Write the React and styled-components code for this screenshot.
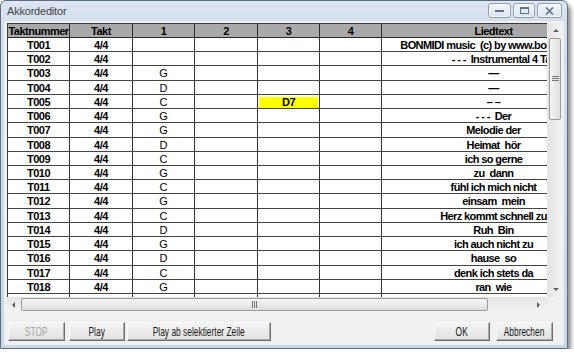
import React from 'react';
import styled, { createGlobalStyle } from 'styled-components';

const GlobalStyle = createGlobalStyle`
  html, body { margin: 0; padding: 0; background: #fff; }
  body { font-family: "Liberation Sans", Arial, sans-serif; }
`;

const COLS = [62, 63, 62, 63, 62, 62, 224];
const HEAD = ['Taktnummer', 'Takt', '1', '2', '3', '4', 'Liedtext'];
const ROW_H = 14.22;

const rows = [
  ['T001', '', '', 'BONMIDI music  (c) by www.bonmidi.de'],
  ['T002', '', '', '            - - -  Instrumental 4 Takte'],
  ['T003', 'G', '', '\u2014'],
  ['T004', 'D', '', '\u2014'],
  ['T005', 'C', 'D7', '\u2013 \u2013'],
  ['T006', 'G', '', '- - -  Der'],
  ['T007', 'G', '', 'Melodie der'],
  ['T008', 'D', '', 'Heimat  hör'],
  ['T009', 'C', '', 'ich so gerne'],
  ['T010', 'G', '', 'zu  dann'],
  ['T011', 'C', '', 'fühl ich mich nicht'],
  ['T012', 'G', '', 'einsam  mein'],
  ['T013', 'C', '', 'Herz kommt schnell zu'],
  ['T014', 'D', '', 'Ruh  Bin'],
  ['T015', 'G', '', 'ich auch nicht zu'],
  ['T016', 'D', '', 'hause  so'],
  ['T017', 'C', '', 'denk ich stets da'],
  ['T018', 'G', '', 'ran  wie'],
  ['', '', '', ''],
];

const Frame = styled.div`
  box-sizing: border-box;
  width: 568px;
  height: 349px;
  border: 1px solid #5f6f82;
  border-radius: 6px 6px 0 0;
  background: linear-gradient(#dde7f3 0, #d3dfec 20px, #c9d7e6 100%);
  box-shadow: 3px 4px 4px rgba(0, 0, 0, 0.45);
  display: flex;
  flex-direction: column;
`;

const TitleBar = styled.div`
  height: 20px;
  display: flex;
  align-items: flex-start;
  justify-content: space-between;
`;

const Title = styled.div`
  padding: 4px 0 0 6px;
  font-size: 11px;
  letter-spacing: -0.2px;
  color: #444;
`;

const Controls = styled.div`
  display: flex;
  margin: 2px 5px 0 0;
`;

const Ctrl = styled.div`
  box-sizing: border-box;
  width: ${p => p.$w}px;
  height: 15px;
  margin-left: ${p => p.$ml || 0}px;
  border: 1px solid #8e9fb5;
  border-radius: 3px;
  background: linear-gradient(#f4f7fb, #dbe4ef);
  box-shadow: inset 0 0 0 1px rgba(255, 255, 255, 0.7);
  display: flex;
  align-items: center;
  justify-content: center;
`;

const Client = styled.div`
  flex: 1;
  margin: 0 3px 3px 3px;
  background: #f0f0f0;
  padding: 2px 2px 0 3px;
  display: flex;
  flex-direction: column;
`;

const GridBox = styled.div`
  display: grid;
  grid-template-columns: 540px 15px;
  grid-template-rows: 274px 15px;
`;

const TableView = styled.div`
  overflow: hidden;
  border-left: 1px solid #3a3a3a;
  border-top: 1px solid #3a3a3a;
  background: #fff;
`;

const Row = styled.div`
  display: flex;
  width: max-content;
  height: ${p => (p.$head ? 14 : ROW_H)}px;
  box-sizing: border-box;
  border-bottom: 1px solid ${p => (p.$head ? '#2a2a2a' : '#454545')};
  background: ${p => (p.$head ? '#a9a9a9' : '#fff')};
`;

const Cell = styled.div`
  box-sizing: border-box;
  width: ${p => p.$w}px;
  flex: none;
  border-right: 1px solid ${p => (p.$head ? '#2a2a2a' : '#353535')};
  overflow: hidden;
  white-space: pre;
  text-align: center;
  font-size: 11px;
  line-height: 14px;
  font-weight: ${p => (p.$light ? 400 : 700)};
  letter-spacing: ${p => (p.$light ? 0 : p.$tight ? -0.6 : -0.5)}px;
  color: #000;
`;

const Mark = styled.div`
  margin: 2px 1px 0 1px;
  height: 11px;
  line-height: 11px;
  background: ${p => (p.$on ? '#ffff00' : 'transparent')};
`;

const VScroll = styled.div`
  display: flex;
  flex-direction: column;
  background: linear-gradient(to right, #e4e4e4, #f3f3f3);
  border-left: 1px solid #e8e8e8;
  box-sizing: border-box;
`;

const HScroll = styled.div`
  display: flex;
  background: linear-gradient(#e4e4e4, #f3f3f3);
`;

const Corner = styled.div`
  background: #f0f0f0;
`;

const Arrow = styled.div`
  flex: none;
  width: ${p => p.$w || 15}px;
  height: ${p => p.$h || 15}px;
  display: flex;
  align-items: center;
  justify-content: center;
`;

const Thumb = styled.div`
  flex: none;
  box-sizing: border-box;
  ${p => (p.$vert ? `height: ${p.$len}px; margin: 0 1px;` : `width: ${p.$len}px; margin: 1px 0;`)}
  border: 1px solid #9b9b9b;
  border-radius: 2px;
  background: ${p =>
    p.$vert
      ? 'linear-gradient(to right, #f6f6f6, #dedede)'
      : 'linear-gradient(#f6f6f6, #dedede)'};
  display: flex;
  align-items: center;
  justify-content: center;
`;

const Track = styled.div`
  flex: 1;
`;

const ButtonBar = styled.div`
  display: flex;
  justify-content: space-between;
  margin-top: 10px;
  padding: 0 9px 0 1px;
`;

const Group = styled.div`
  display: flex;
`;

const Btn = styled.button`
  box-sizing: border-box;
  width: ${p => p.$w}px;
  height: 19px;
  margin-left: ${p => p.$ml || 0}px;
  padding: 0;
  font-family: "Liberation Sans", Arial, sans-serif;
  font-size: 12px;
  color: ${p => (p.disabled ? '#a6a6a6' : '#1c1c1c')};
  background: linear-gradient(#f4f4f4, #e1e1e1);
  border: 1px solid;
  border-color: #fafafa #6e6e6e #6e6e6e #fafafa;
  box-shadow: inset -1px -1px #ababab;
  display: flex;
  align-items: center;
  justify-content: center;
  overflow: hidden;
`;

const BtnLabel = styled.span`
  display: inline-block;
  white-space: nowrap;
  transform: scaleX(0.7);
`;

const Tri = ({ dir }) => {
  const pts = {
    up: '1,5 4,2 7,5',
    down: '1,2 4,5 7,2',
    left: '5,1 2,4 5,7',
    right: '2,1 5,4 2,7',
  }[dir];
  return (
    <svg width="8" height="8" viewBox="0 0 8 8">
      <polygon points={pts} fill="#5e5e5e" />
    </svg>
  );
};

const Grip = ({ vert }) => (
  <svg width={vert ? 7 : 6} height={vert ? 6 : 7} viewBox={vert ? '0 0 7 6' : '0 0 6 7'}>
    {[0, 2, 4].map(i =>
      vert ? (
        <rect key={i} x="0" y={i} width="7" height="1" fill="#777" />
      ) : (
        <rect key={i} x={i} y="0" width="1" height="7" fill="#777" />
      )
    )}
  </svg>
);

export default function App() {
  return (
    <>
      <GlobalStyle />
      <Frame>
        <TitleBar>
          <Title>Akkordeditor</Title>
          <Controls>
            <Ctrl $w={23}>
              <svg width="9" height="4"><rect x="0" y="1" width="9" height="2" fill="#627389" /></svg>
            </Ctrl>
            <Ctrl $w={22} $ml={2}>
              <svg width="9" height="7"><rect x="0.5" y="0.5" width="8" height="6" fill="none" stroke="#627389" /><rect x="1" y="1" width="7" height="1" fill="#627389" /></svg>
            </Ctrl>
            <Ctrl $w={25} $ml={2}>
              <svg width="9" height="8" viewBox="0 0 9 8"><path d="M1 0.5 L8 7.5 M8 0.5 L1 7.5" stroke="#627389" strokeWidth="1.6" /></svg>
            </Ctrl>
          </Controls>
        </TitleBar>
        <Client>
          <GridBox>
            <TableView>
              <Row $head>
                {HEAD.map((h, i) => (
                  <Cell key={h} $w={COLS[i]} $head>{h}</Cell>
                ))}
              </Row>
              {rows.map(([nr, chord, c3, text], idx) => (
                <Row key={idx}>
                  <Cell $w={COLS[0]}>{nr}</Cell>
                  <Cell $w={COLS[1]}>{nr ? '4/4' : ''}</Cell>
                  <Cell $w={COLS[2]} $light>{chord}</Cell>
                  <Cell $w={COLS[3]} />
                  <Cell $w={COLS[4]}>
                    <Mark $on={!!c3}>{c3}</Mark>
                  </Cell>
                  <Cell $w={COLS[5]} />
                  <Cell $w={COLS[6]} $tight>{text}</Cell>
                </Row>
              ))}
            </TableView>
            <VScroll>
              <Arrow><Tri dir="up" /></Arrow>
              <Thumb $vert $len={82}><Grip vert /></Thumb>
              <Track />
              <Arrow><Tri dir="down" /></Arrow>
            </VScroll>
            <HScroll>
              <Arrow $w={14}><Tri dir="left" /></Arrow>
              <Thumb $len={467}><Grip /></Thumb>
              <Track />
              <Arrow $w={16}><Tri dir="right" /></Arrow>
            </HScroll>
            <Corner />
          </GridBox>
          <ButtonBar>
            <Group>
              <Btn $w={57} disabled><BtnLabel>STOP</BtnLabel></Btn>
              <Btn $w={56} $ml={4}><BtnLabel>Play</BtnLabel></Btn>
              <Btn $w={144} $ml={2}><BtnLabel>Play ab selektierter Zeile</BtnLabel></Btn>
            </Group>
            <Group>
              <Btn $w={56}><BtnLabel>OK</BtnLabel></Btn>
              <Btn $w={57} $ml={6}><BtnLabel>Abbrechen</BtnLabel></Btn>
            </Group>
          </ButtonBar>
        </Client>
      </Frame>
    </>
  );
}
